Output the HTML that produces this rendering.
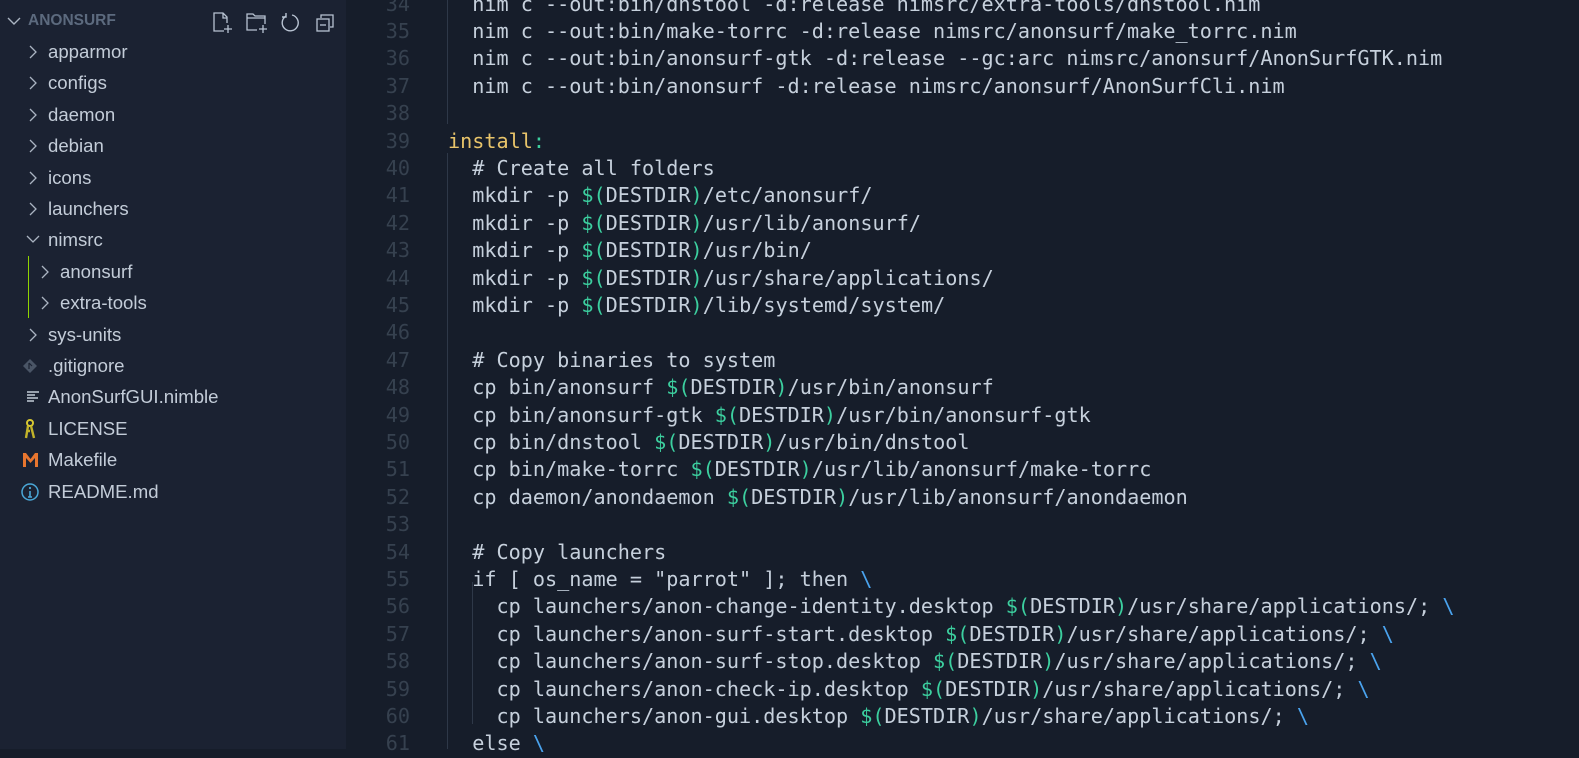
<!DOCTYPE html>
<html><head><meta charset="utf-8">
<style>
*{margin:0;padding:0;box-sizing:border-box}
html,body{width:1579px;height:749px;overflow:hidden;background:#161d2a}
#side{position:absolute;left:0;top:0;width:346px;height:749px;background:#1b2232;font-family:"Liberation Sans","DejaVu Sans",sans-serif;color:#c3ccd8;font-size:18.6px}
.row{position:absolute;left:0;height:31px;line-height:31px;white-space:nowrap}
.chev{position:absolute;top:9px}
#ed{position:absolute;left:346px;top:0;right:0;bottom:0;background:#161d2a;font-family:"DejaVu Sans Mono","Liberation Mono",monospace;font-size:20.15px;color:#c6d0dc}
.ln{position:absolute;left:0;width:64px;text-align:right;color:#36414f;height:27.4px;line-height:27.4px}
.cl{position:absolute;left:102px;height:27.4px;line-height:27.4px;white-space:pre}
.g{color:#3ccf9f}.y{color:#e8c46a}.b{color:#4aa3ee}
.guide{position:absolute;width:1px;background:#2e3848}
</style></head><body>
<div id="side">
 <div class="row" style="top:4px;left:0;width:346px;height:34px;line-height:34px">
  <svg style="position:absolute;left:7px;top:13px" width="14" height="9" viewBox="0 0 14 9"><path d="M1 1l6 6 6-6" fill="none" stroke="#aab4c2" stroke-width="1.4"/></svg>
  <span style="position:absolute;left:28px;font-weight:bold;font-size:15.5px;color:#5c6a7e">ANONSURF</span>
  <svg style="position:absolute;left:212px;top:7px" width="22" height="24" viewBox="0 0 22 24" fill="none" stroke="#b8c3d2" stroke-width="1.3"><path d="M12 20H2V2h9l4 4v6M11 2v5h4M16 14v8M12 18h8"/></svg>
  <svg style="position:absolute;left:245px;top:7px" width="24" height="24" viewBox="0 0 24 24" fill="none" stroke="#b8c3d2" stroke-width="1.3"><path d="M12 19H2V3h6l2 2h10v8M2 7h18M18 14v8M14 18h8"/></svg>
  <svg style="position:absolute;left:280px;top:8px" width="20" height="20" viewBox="0 0 20 20" fill="none" stroke="#b8c3d2" stroke-width="1.4"><path d="M6 4A8 8 0 1 0 12 3M6 1v4H2"/></svg>
  <svg style="position:absolute;left:315px;top:9px" width="20" height="20" viewBox="0 0 20 20" fill="none" stroke="#b8c3d2" stroke-width="1.3"><path d="M6 5V2h12v12h-3"/><rect x="2" y="6" width="12" height="12"/><path d="M5 12h6"/></svg>
 </div>
 <div id="tree"></div>
 <div style="position:absolute;left:28px;top:256px;width:1px;height:62px;background:#8fd400"></div>
</div>
<div id="ed">
 <div class="guide" style="left:101px;top:0;height:124px"></div>
 <div class="guide" style="left:101px;top:153px;height:596px"></div>
 <div class="guide" style="left:126px;top:582px;height:142px"></div>
 <div id="code"></div>
</div>
<script>
const items=[
["apparmor",0,"c"],["configs",0,"c"],["daemon",0,"c"],["debian",0,"c"],["icons",0,"c"],["launchers",0,"c"],["nimsrc",0,"o"],["anonsurf",1,"c"],["extra-tools",1,"c"],["sys-units",0,"c"],[".gitignore",0,"git"],["AnonSurfGUI.nimble",0,"lines"],["LICENSE",0,"key"],["Makefile",0,"m"],["README.md",0,"info"]];
let h="";
items.forEach((it,i)=>{
 const top=36+i*31.4; const ind=it[1]*12; let ic="";
 const x=26+ind;
 if(it[2]=="c") ic=`<svg class="chev" style="left:${x+2}px" width="10" height="14" viewBox="0 0 10 14"><path d="M2 1l6 6-6 6" fill="none" stroke="#aab4c2" stroke-width="1.3"/></svg>`;
 else if(it[2]=="o") ic=`<svg class="chev" style="left:${x}px;top:11px" width="14" height="9" viewBox="0 0 14 9"><path d="M1 1l6 6 6-6" fill="none" stroke="#aab4c2" stroke-width="1.3"/></svg>`;
 else if(it[2]=="git") ic=`<svg class="chev" style="left:22px;top:8px" width="16" height="16" viewBox="0 0 16 16"><path d="M8 1l7 7-7 7-7-7z" fill="#4a5566"/><path d="M7 5v6M7 5l3 3" stroke="#1b2232" stroke-width="1.2"/></svg>`;
 else if(it[2]=="lines") ic=`<svg class="chev" style="left:26px;top:10px" width="14" height="12" viewBox="0 0 14 12"><path d="M1 1h12M1 4h8M1 7h11M1 10h7" stroke="#c3ccd8" stroke-width="1.4"/></svg>`;
 else if(it[2]=="key") ic=`<svg class="chev" style="left:23px;top:6px" width="14" height="20" viewBox="0 0 14 20"><circle cx="7" cy="4" r="3" fill="none" stroke="#d8c832" stroke-width="2"/><path d="M5 7l-2 12M8 7l3 12M4 12h3" stroke="#c2b32a" stroke-width="2.4"/></svg>`;
 else if(it[2]=="m") ic=`<svg class="chev" style="left:22px;top:8px" width="17" height="15" viewBox="0 0 17 15"><path d="M1 15V1h3l4.5 6L13 1h3v14h-3V6l-4.5 5L4 6v9z" fill="#e8762f"/></svg>`;
 else if(it[2]=="info") ic=`<svg class="chev" style="left:21px;top:7px" width="18" height="18" viewBox="0 0 18 18"><circle cx="9" cy="9" r="8" fill="none" stroke="#4aa8d8" stroke-width="1.5"/><path d="M9 8v6M7 14h4" stroke="#4aa8d8" stroke-width="1.6"/><circle cx="9" cy="5" r="1.1" fill="#4aa8d8"/></svg>`;
 h+=`<div class="row" style="top:${top}px;width:346px">${ic}<span style="position:absolute;left:${48+ind}px">${it[0]}</span></div>`;
});
document.getElementById("tree").innerHTML=h;
const D='<span class="g">$(</span>DESTDIR<span class="g">)</span>';
const B=' <span class="b">\\</span>';
const lines=[
"  nim c --out:bin/dnstool -d:release nimsrc/extra-tools/dnstool.nim",
"  nim c --out:bin/make-torrc -d:release nimsrc/anonsurf/make_torrc.nim",
"  nim c --out:bin/anonsurf-gtk -d:release --gc:arc nimsrc/anonsurf/AnonSurfGTK.nim",
"  nim c --out:bin/anonsurf -d:release nimsrc/anonsurf/AnonSurfCli.nim",
"",
'<span class="y">install</span><span class="g">:</span>',
"  # Create all folders",
"  mkdir -p "+D+"/etc/anonsurf/",
"  mkdir -p "+D+"/usr/lib/anonsurf/",
"  mkdir -p "+D+"/usr/bin/",
"  mkdir -p "+D+"/usr/share/applications/",
"  mkdir -p "+D+"/lib/systemd/system/",
"",
"  # Copy binaries to system",
"  cp bin/anonsurf "+D+"/usr/bin/anonsurf",
"  cp bin/anonsurf-gtk "+D+"/usr/bin/anonsurf-gtk",
"  cp bin/dnstool "+D+"/usr/bin/dnstool",
"  cp bin/make-torrc "+D+"/usr/lib/anonsurf/make-torrc",
"  cp daemon/anondaemon "+D+"/usr/lib/anonsurf/anondaemon",
"",
"  # Copy launchers",
'  if [ os_name = "parrot" ]; then'+B,
"    cp launchers/anon-change-identity.desktop "+D+"/usr/share/applications/;"+B,
"    cp launchers/anon-surf-start.desktop "+D+"/usr/share/applications/;"+B,
"    cp launchers/anon-surf-stop.desktop "+D+"/usr/share/applications/;"+B,
"    cp launchers/anon-check-ip.desktop "+D+"/usr/share/applications/;"+B,
"    cp launchers/anon-gui.desktop "+D+"/usr/share/applications/;"+B,
"  else"+B];
let c="";
lines.forEach((l,i)=>{const t=-9.4+i*27.4;
c+=`<div class="ln" style="top:${t}px">${34+i}</div><div class="cl" style="top:${t}px">${l}</div>`;});
document.getElementById("code").innerHTML=c;
</script>
</body></html>
